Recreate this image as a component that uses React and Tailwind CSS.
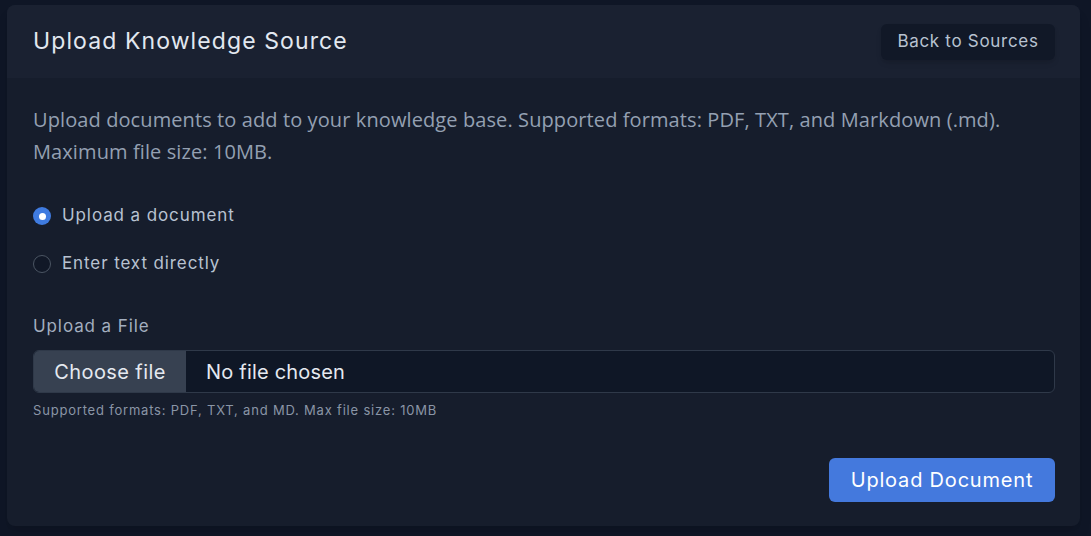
import React, { useState } from 'react';

const heading = { fontFamily: 'Inter, "Noto Sans", sans-serif' };
const body = { fontFamily: '"Open Sans", "Noto Sans", sans-serif' };

const Radio = ({ checked, label, onClick }) => (
  <button type="button" onClick={onClick} className="flex items-center h-6 text-left">
    {checked ? (
      <span className="w-[18px] h-[18px] rounded-full bg-[#3f7be0] flex items-center justify-center">
        <span className="w-[7px] h-[7px] rounded-full bg-white" />
      </span>
    ) : (
      <span className="w-[18px] h-[18px] rounded-full border border-[#4b5563] bg-[#111827]" />
    )}
    <span className="ml-[11px] text-[17px] tracking-[0.9px] text-[#b8c2d1]" style={heading}>
      {label}
    </span>
  </button>
);

const App = () => {
  const [mode, setMode] = useState('upload');

  return (
    <div className="min-h-screen bg-[#0f1626] pl-[7px] pr-[11px] pt-[5px]">
      <div className="rounded-lg bg-[#161d2c] overflow-hidden shadow-lg">
        {/* Header */}
        <div className="h-[73px] flex items-center justify-between pl-[26px] pr-[25px] bg-[#1a2131]">
          <h2 className="text-[23px] tracking-[1.1px] text-[#e2e8f0]" style={heading}>
            Upload Knowledge Source
          </h2>
          <button
            className="h-9 w-[174px] rounded-md bg-[#111827] text-[17px] tracking-[0.7px] text-[#b8c2d1] shadow-md"
            style={heading}
          >
            Back to Sources
          </button>
        </div>

        {/* Body */}
        <div className="pl-[26px] pr-[25px] pt-[26px] pb-6">
          <p className="text-[20px] tracking-[0.1px] leading-8 text-[#94a0b2]" style={body}>
            Upload documents to add to your knowledge base. Supported formats: PDF, TXT, and Markdown (.md).
            <br />
            Maximum file size: 10MB.
          </p>

          <div className="mt-9 flex flex-col gap-6">
            <Radio checked={mode === 'upload'} label="Upload a document" onClick={() => setMode('upload')} />
            <Radio checked={mode === 'text'} label="Enter text directly" onClick={() => setMode('text')} />
          </div>

          <div className="mt-[38px]">
            <label className="block text-[17px] tracking-[0.9px] leading-6 text-[#a3aebf]" style={heading}>
              Upload a File
            </label>
            <div className="mt-3 h-[43px] flex rounded-md border border-[#2f3949] bg-[#0f1726] overflow-hidden">
              <span
                className="w-[152px] flex items-center justify-center bg-[#374151] text-[20px] tracking-[0.4px] text-[#e5e9f0]"
                style={heading}
              >
                Choose file
              </span>
              <span className="flex items-center pl-5 text-[20px] tracking-[0.2px] text-[#e5e9f0]" style={heading}>
                No file chosen
              </span>
            </div>
            <p className="mt-[7px] text-[13px] tracking-[0.8px] leading-5 text-[#8a95a6]" style={heading}>
              Supported formats: PDF, TXT, and MD. Max file size: 10MB
            </p>
          </div>

          <div className="mt-[38px] flex justify-end">
            <button
              className="h-11 w-[226px] rounded-md bg-[#4479dd] text-[20px] tracking-[0.8px] text-white"
              style={heading}
            >
              Upload Document
            </button>
          </div>
        </div>
      </div>
    </div>
  );
};

export default App;
